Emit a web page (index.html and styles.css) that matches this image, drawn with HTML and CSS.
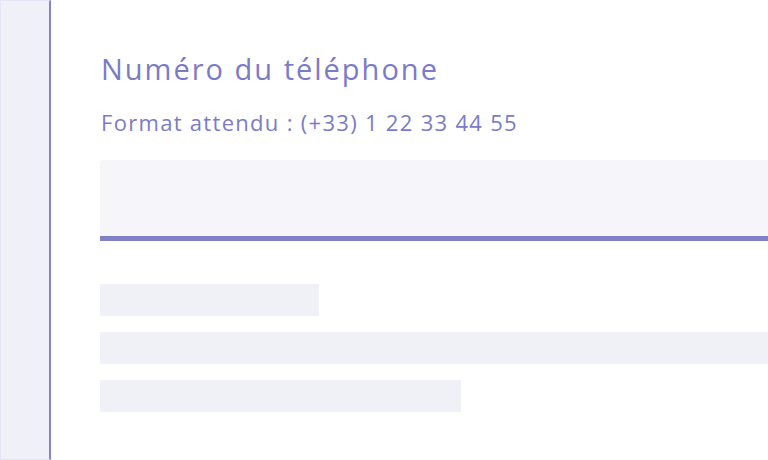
FILE: index.html
```html
<!DOCTYPE html>
<html lang="fr">
<head>
<meta charset="utf-8">
<link rel="stylesheet" href="styles.css">
</head>
<body>
<div class="layout">
  <aside class="sidebar"></aside>
  <main class="main">
    <h1 class="label">Numéro du téléphone</h1>
    <p class="hint">Format attendu : (+33) 1 22 33 44 55</p>
    <div class="input"></div>
    <div class="skeleton">
      <div class="sk sk-1"></div>
      <div class="sk sk-2"></div>
      <div class="sk sk-3"></div>
    </div>
  </main>
</div>
</body>
</html>
```
FILE: styles.css
```css
html, body {
  margin: 0;
  padding: 0;
  background: #ffffff;
}
body {
  width: 768px;
  height: 460px;
  overflow: hidden;
  font-family: "Open Sans", "Liberation Sans", sans-serif;
}
.layout {
  display: flex;
  height: 460px;
}
.sidebar {
  width: 48px;
  flex: none;
  box-sizing: content-box;
  background: #f0f1f8;
  border-left: 1px solid #e4e4f5;
  border-top: 1px solid #e4e4f5;
  border-bottom: 1px solid #e4e4f5;
  border-right: 2px solid #8585c9;
  height: 458px;
}
.main {
  flex: 1;
  padding-left: 50px;
  padding-top: 51px;
  min-width: 0;
}
.label {
  margin: 0;
  font-weight: 400;
  font-size: 29px;
  line-height: 36px;
  letter-spacing: 2px;
  color: #7b7bc7;
}
.hint {
  margin: 22px 0 0;
  font-size: 22px;
  line-height: 26px;
  letter-spacing: 1.3px;
  color: #7b7bc7;
}
.input {
  margin: 25px 0 0 -1px;
  height: 76px;
  background: #f5f5fa;
  border-top-left-radius: 4px;
  border-bottom: 5px solid #8181c7;
}
.skeleton {
  margin: 43px 0 0 -1px;
  display: flex;
  flex-direction: column;
  gap: 16px;
}
.sk {
  height: 32px;
  background: #f0f1f7;
}
.sk-1 { width: 219px; }
.sk-2 { width: 100%; }
.sk-3 { width: 361px; }
```
